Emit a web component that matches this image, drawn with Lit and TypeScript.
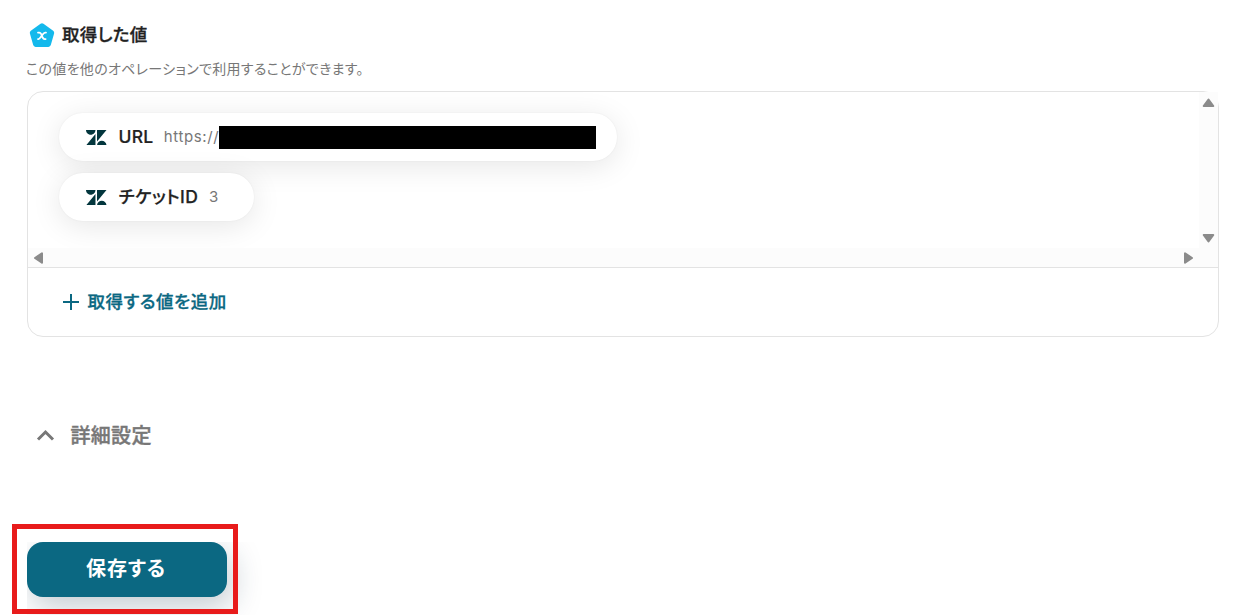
import { LitElement, html, css, svg } from "lit";
import { customElement, property } from "lit/decorators.js";

@customElement("value-chip")
export class ValueChip extends LitElement {
  @property() label = "";
  @property() value = "";
  @property({ type: Boolean }) masked = false;

  static styles = css`
    :host {
      display: block;
      width: fit-content;
    }

    .chip {
      display: flex;
      align-items: center;
      box-sizing: border-box;
      height: 48px;
      padding: 0 35px 2px 27px;
      border-radius: 24px;
      background: #fff;
      box-shadow: 0 5px 30px rgba(0, 0, 0, 0.1), 0 0 2px rgba(0, 0, 0, 0.06);
    }

    .chip.masked {
      padding-right: 21px;
    }

    .logo {
      width: 20.5px;
      height: 15.5px;
      margin-top: 3px;
      fill: #03363d;
    }

    .label {
      margin-left: 12px;
      color: #222;
      font-size: 17.5px;
      font-weight: 500;
      letter-spacing: 0.2px;
      font-feature-settings: "palt";
      -webkit-text-stroke: 0.2px;
    }

    .label.kana {
      margin-bottom: 1px;
      letter-spacing: 0.5px;
      -webkit-text-stroke: 0.25px;
    }

    .value {
      margin-left: 10.5px;
      color: #777;
      font-size: 15px;
      letter-spacing: 0.6px;
    }

    .mask {
      width: 377px;
      height: 23px;
      margin-top: 3px;
      background: #000;
    }
  `;

  render() {
    return html`
      <div class="chip ${this.masked ? "masked" : ""}">
        <svg class="logo" viewBox="0 2.9 24 18.2" preserveAspectRatio="none">
          <path
            d="M12.914 2.904V16.29L24 2.905H12.914zM0 2.906C0 5.966 2.483 8.45 5.543 8.45s5.542-2.484 5.543-5.544H0zm11.086 4.807L0 21.096h11.086V7.713zm7.37 7.84c-3.063 0-5.542 2.48-5.542 5.543H24c0-3.06-2.48-5.543-5.543-5.543z"
          />
        </svg>
        <span class="label ${this.masked ? "" : "kana"}">${this.label}</span>
        <span class="value">${this.value}</span>
        ${this.masked ? html`<span class="mask"></span>` : ""}
      </div>
    `;
  }
}

const arrow = (d: string) => svg`
  <path d=${d} fill="#8b8b8b" stroke="#8b8b8b" stroke-width="2" stroke-linejoin="round" />
`;

@customElement("app-root")
export class AppRoot extends LitElement {
  static styles = css`
    :host {
      display: block;
      position: relative;
      box-sizing: border-box;
      height: 615px;
      padding: 23px 22px 0 27px;
      overflow: hidden;
      background: #fff;
      color: #222;
      font-family: Inter, "Noto Sans CJK JP", sans-serif;
    }

    .heading {
      display: flex;
      align-items: center;
      height: 24px;
    }

    .heading svg {
      width: 30px;
      height: 26px;
    }

    h2 {
      margin: 0 0 0 5px;
      font-size: 17.5px;
      font-weight: 500;
      line-height: 24px;
      letter-spacing: 0.3px;
      font-feature-settings: "palt";
      -webkit-text-stroke: 0.3px;
    }

    .note {
      margin: 11px 0 0 -1px;
      height: 33px;
      color: #777;
      font-size: 14px;
      line-height: 22px;
      letter-spacing: 0.32px;
      font-feature-settings: "palt";
    }

    .panel {
      box-sizing: border-box;
      width: 1192px;
      height: 246px;
      border: 1px solid #e3e3e3;
      border-radius: 16px;
    }

    .scroller {
      display: grid;
      grid-template-columns: 1fr 19px;
      grid-template-rows: 156px 19px;
      border-bottom: 1px solid #e3e3e3;
    }

    .values {
      display: flex;
      flex-direction: column;
      gap: 12px;
      padding: 21px 0 0 31px;
      overflow: hidden;
      border-top-left-radius: 15px;
    }

    .vbar,
    .hbar {
      display: flex;
      justify-content: space-between;
      background: #fcfcfc;
    }

    .vbar {
      flex-direction: column;
    }

    .hbar {
      grid-column: 1 / 3;
      padding-right: 19px;
    }

    .vbar svg,
    .hbar svg {
      width: 19px;
      height: 19px;
    }

    .add {
      display: flex;
      align-items: center;
      height: 68px;
      padding-left: 35px;
      color: #0b6882;
      font-size: 17.5px;
      font-weight: 500;
      letter-spacing: 0.5px;
      font-feature-settings: "palt";
      -webkit-text-stroke: 0.3px;
    }

    .add span {
      margin-bottom: 3px;
    }

    .add svg {
      width: 16px;
      height: 16px;
      margin-right: 8.5px;
    }

    .details {
      display: flex;
      align-items: center;
      height: 30px;
      margin-top: 83px;
      padding-left: 9px;
      color: #777;
      font-size: 20px;
      font-weight: 500;
      letter-spacing: 0.3px;
      -webkit-text-stroke: 0.4px;
    }

    .details span {
      margin-bottom: 2px;
    }

    .details svg {
      width: 19px;
      height: 12px;
      margin-right: 15.5px;
    }

    .actions {
      height: 73px;
      margin-top: 92px;
      overflow: hidden;
    }

    button {
      width: 200px;
      height: 55px;
      padding: 0 2px 4px 0;
      border: 0;
      border-radius: 16px;
      background: #0b6882;
      box-shadow: 5px 10px 30px rgba(20, 50, 75, 0.25);
      color: #fff;
      font-family: inherit;
      font-size: 20px;
      font-weight: 700;
      letter-spacing: 0.9px;
      font-feature-settings: "palt";
    }

    .highlight {
      position: absolute;
      box-sizing: border-box;
      left: 12px;
      top: 524px;
      width: 226px;
      height: 90px;
      border: 5px solid #e81b1b;
    }
  `;

  render() {
    return html`
      <div class="heading">
        <svg viewBox="0 0 30 26">
          <path
            d="M15 3.7 24.7 10.8 21.4 22.4H8.6L5.3 10.8Z"
            fill="#14b9ec"
            stroke="#14b9ec"
            stroke-width="5"
            stroke-linejoin="round"
          />
          <path
            d="M11 10.6h1.2c1.6 0 2 .9 2.6 2.9.7 2.4 1.1 3.6 2.8 3.6h1M19 10.6h-.8c-1.2 0-1.9 1-3.4 3s-2.1 3.5-3.3 3.5H11"
            fill="none"
            stroke="#fff"
            stroke-width="1.8"
            stroke-linecap="round"
          />
        </svg>
        <h2>取得した値</h2>
      </div>
      <p class="note">この値を他のオペレーションで利用することができます。</p>
      <div class="panel">
        <div class="scroller">
          <div class="values">
            <value-chip label="URL" value="https://" masked></value-chip>
            <value-chip label="チケットID" value="3"></value-chip>
          </div>
          <div class="vbar">
            <svg viewBox="0 0 19 19">${arrow("M9.5 7.5 14.3 14H4.7Z")}</svg>
            <svg viewBox="0 0 19 19">${arrow("M9.5 12.5 14.3 6H4.7Z")}</svg>
          </div>
          <div class="hbar">
            <svg viewBox="0 0 19 19">${arrow("M7 10 14 5.2V14.8Z")}</svg>
            <svg viewBox="0 0 19 19">${arrow("M12 10 5 5.2V14.8Z")}</svg>
          </div>
        </div>
        <div class="add">
          <svg viewBox="0 0 16 16">
            <path d="M8 0v16M0 8h16" stroke="currentColor" stroke-width="2" />
          </svg>
          <span>取得する値を追加</span>
        </div>
      </div>
      <div class="details">
        <svg viewBox="0 0 19 12">
          <path d="M2 10.5 9.5 3 17 10.5" fill="none" stroke="currentColor" stroke-width="3" />
        </svg>
        <span>詳細設定</span>
      </div>
      <div class="actions"><button>保存する</button></div>
      <div class="highlight"></div>
    `;
  }
}

declare global {
  interface HTMLElementTagNameMap {
    "value-chip": ValueChip;
    "app-root": AppRoot;
  }
}
